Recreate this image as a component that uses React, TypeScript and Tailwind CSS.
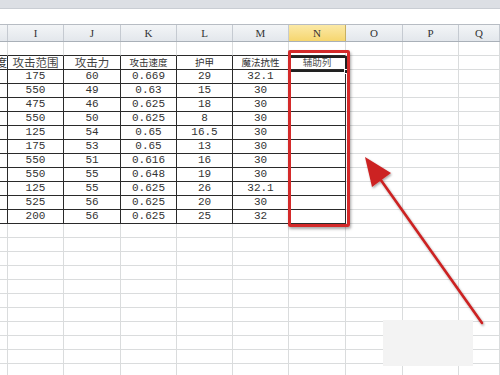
import React from 'react';

const cols = [
  { key: 'H', w: 'w-[8px]' },
  { key: 'I', w: 'w-[56px]' },
  { key: 'J', w: 'w-[57px]' },
  { key: 'K', w: 'w-[56px]' },
  { key: 'L', w: 'w-[56px]' },
  { key: 'M', w: 'w-[56px]' },
  { key: 'N', w: 'w-[57px]' },
  { key: 'O', w: 'w-[57px]' },
  { key: 'P', w: 'w-[56px]' },
  { key: 'Q', w: 'flex-1' },
];

const data = [
  ['175', '60', '0.669', '29', '32.1'],
  ['550', '49', '0.63', '15', '30'],
  ['475', '46', '0.625', '18', '30'],
  ['550', '50', '0.625', '8', '30'],
  ['125', '54', '0.65', '16.5', '30'],
  ['175', '53', '0.65', '13', '30'],
  ['550', '51', '0.616', '16', '30'],
  ['550', '55', '0.648', '19', '30'],
  ['125', '55', '0.625', '26', '32.1'],
  ['525', '56', '0.625', '20', '30'],
  ['200', '56', '0.625', '25', '32'],
];

const TOTAL_ROWS = 24;
const cjk = "font-['Noto_Sans_CJK_SC',sans-serif]";
const mono = "font-['Liberation_Mono',monospace]";

function cellContent(row: number, col: number): React.ReactNode {
  // row 1 = table header, rows 2..12 = data
  if (row === 1) {
    if (col === 0) return <span className={`${cjk} text-[11px] text-[#333] -ml-[4px]`}>度</span>;
    if (col === 1) return <span className={`${cjk} text-[11.5px] text-[#444]`}>攻击范围</span>;
    if (col === 2) return <span className={`${cjk} text-[11.5px] text-[#444]`}>攻击力</span>;
    if (col === 3) return <span className={`${cjk} text-[9.5px] text-[#333]`}>攻击速度</span>;
    if (col === 4) return <span className={`${cjk} text-[9.5px] text-[#333]`}>护甲</span>;
    if (col === 5) return <span className={`${cjk} text-[9.5px] text-[#333]`}>魔法抗性</span>;
    if (col === 6) return <span className={`${cjk} text-[9.5px] text-[#555]`}>辅助列</span>;
    return null;
  }
  if (row >= 2 && row <= 12 && col >= 1 && col <= 5) {
    return <span className={`${mono} text-[11px] text-[#333]`}>{data[row - 2][col - 1]}</span>;
  }
  return null;
}

function Cell({ row, col }: { row: number; col: number }) {
  const inTable = col <= 6 && row >= 0 && row <= 12;
  const darkRight = col <= 6 && row >= 1 && row <= 12;
  const c = cols[col];
  return (
    <div
      className={`${c.w} h-[14px] shrink-0 flex items-center justify-center ${
        col === 0 ? 'overflow-hidden' : ''
      } border-b border-r ${inTable ? 'border-b-[#2a2a2a]' : 'border-b-[#dadcdd]'} ${
        darkRight ? 'border-r-[#2a2a2a]' : 'border-r-[#dadcdd]'
      } leading-none whitespace-nowrap`}
    >
      {cellContent(row, col)}
    </div>
  );
}

export default function App() {
  return (
    <div className="relative w-[500px] h-[375px] overflow-hidden bg-white">
      {/* ribbon edge */}
      <div className="h-[9px] bg-[#dcdfe4] border-b border-[#c9cdd3]" />
      {/* formula bar area */}
      <div className="h-[16px] bg-white border-b border-[#b7bcc3]" />
      {/* column headers */}
      <div className="flex h-[17px] border-b border-[#a9b0b8] bg-gradient-to-b from-[#f3f5f7] to-[#e3e7ec]">
        {cols.map((c) => (
          <div
            key={c.key}
            className={`${c.w} shrink-0 flex items-center justify-center border-r ${
              c.key === 'N'
                ? 'bg-gradient-to-b from-[#fbe9a6] to-[#f6d66e] border-r-[#c8b060]'
                : 'border-r-[#c5cad1]'
            } font-['Liberation_Serif',serif] text-[11px] text-[#333]`}
          >
            {c.key === 'H' ? '' : c.key}
          </div>
        ))}
      </div>
      {/* grid */}
      <div className="flex flex-col">
        {Array.from({ length: TOTAL_ROWS }).map((_, r) => (
          <div key={r} className="flex">
            {cols.map((_, ci) => (
              <Cell key={ci} row={r} col={ci} />
            ))}
          </div>
        ))}
      </div>

      {/* active cell */}
      <div className="absolute left-[288px] top-[56px] w-[59px] h-[16px] border-2 border-[#222]" />
      <div className="absolute left-[344px] top-[69px] w-[5px] h-[5px] bg-[#222] border border-white" />

      {/* red highlight box */}
      <div className="absolute left-[288px] top-[50px] w-[62px] h-[177px] border-[3px] border-[#d42a2a] rounded-[2px] shadow-[1px_2px_3px_rgba(0,0,0,0.35)]" />

      {/* arrow */}
      <svg className="absolute left-0 top-0 pointer-events-none" width="500" height="375">
        <defs>
          <filter id="sh" x="-20%" y="-20%" width="140%" height="140%">
            <feDropShadow dx="1" dy="1.5" stdDeviation="1.2" floodColor="#000" floodOpacity="0.35" />
          </filter>
        </defs>
        <g filter="url(#sh)">
          <line x1="482" y1="323" x2="378" y2="176" stroke="#cc2222" strokeWidth="2.6" strokeLinecap="round" />
          <polygon points="365,157 391,173 372,187" fill="#cc2222" />
        </g>
      </svg>

      {/* watermark cover */}
      <div className="absolute left-[383px] top-[320px] w-[90px] h-[46px] bg-[#f3f3f3]" />
    </div>
  );
}
